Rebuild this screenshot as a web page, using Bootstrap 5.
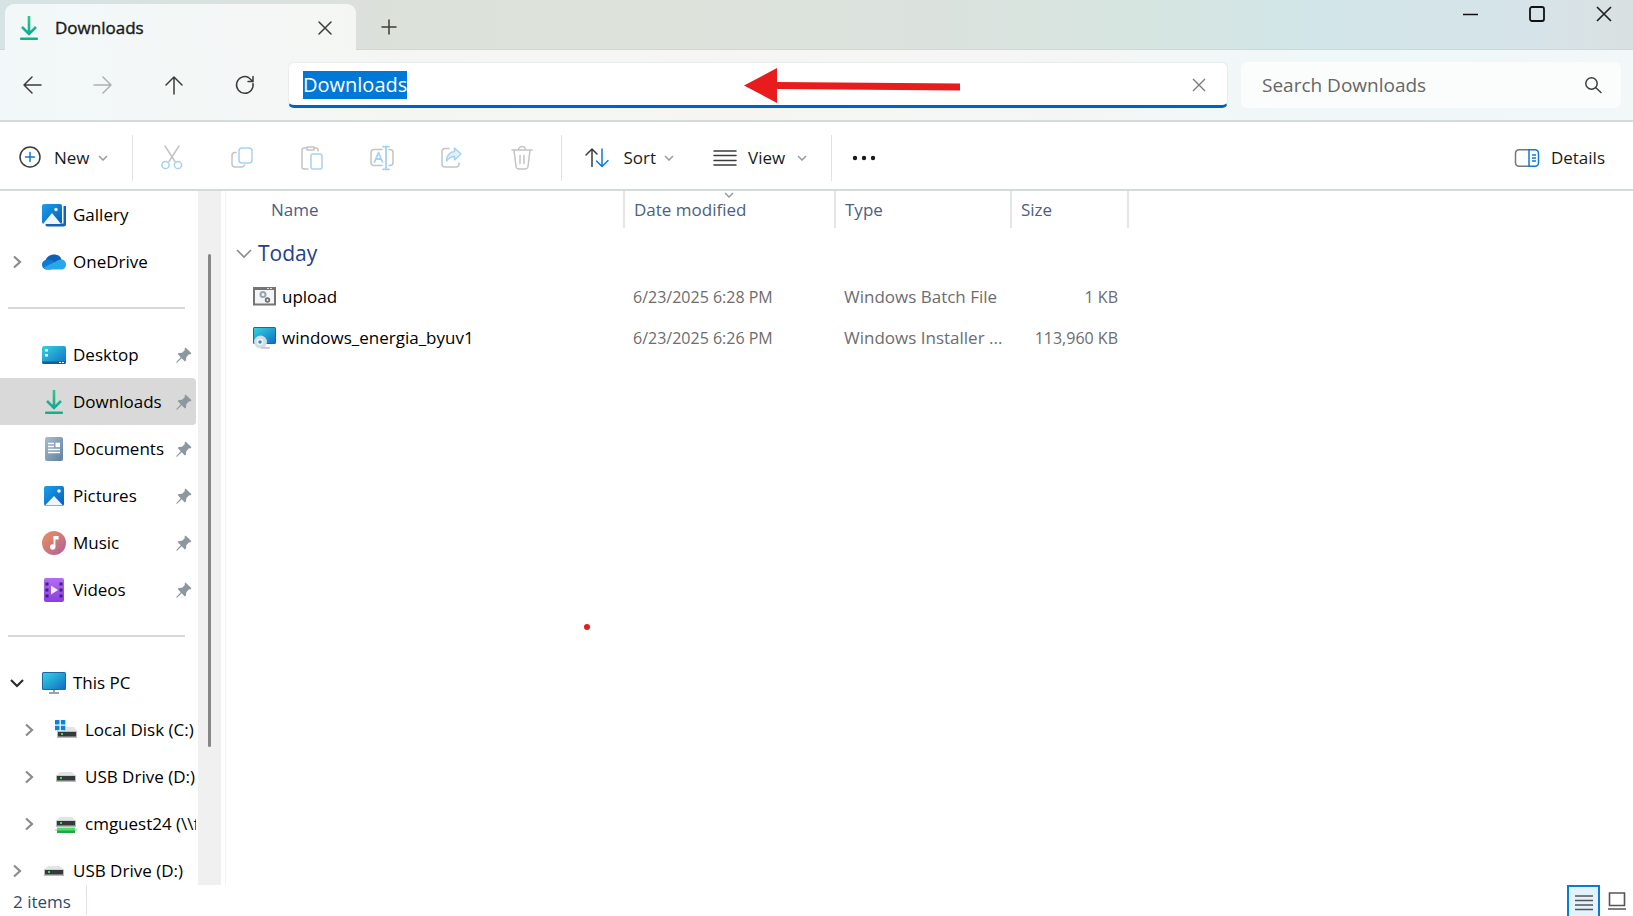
<!DOCTYPE html>
<html lang="en">
<head>
<meta charset="utf-8">
<meta name="viewport" content="width=device-width, initial-scale=1">
<title>Downloads</title>
<link href="https://cdn.jsdelivr.net/npm/bootstrap@5.3.0/dist/css/bootstrap.min.css" rel="stylesheet">
<style>
  body { font-family: "Open Sans", "Noto Sans", sans-serif; font-size: 17px; line-height: 24px; color: #1a1a1a; background: #fff; }
  svg { display: block; flex: none; fill: none; overflow: visible; }
  button { border: 0; background: transparent; padding: 0; color: inherit; display: flex; align-items: center; justify-content: center; }
  .line-icon { stroke: #3c3c3c; stroke-width: 1.5; stroke-linecap: round; stroke-linejoin: round; }
  .faded { stroke: #adb0b0; }
  .grey { stroke: #c4c4c4; } .pale { stroke: #a5d2f3; } .blue { stroke: #0a7bd8; }

  .titlebar { height: 50px; padding-left: 5px; background: linear-gradient(90deg, #d5e3e4 0, #dce1d9 25%, #dde2db 42%, #dbe2de 58%, #d6e5e0 70%, #d2e5e8 80%, #d6e4ea 93%, #dae0e1 100%); box-shadow: inset 0 -1px #cfd8d6; }
  .tab { width: 351px; height: 46px; padding: 2px 24px 0 15px; border-radius: 9px 9px 0 0; background: linear-gradient(90deg, #f2f8f9, #f5f6f4); }
  .tab-title { margin-left: 17px; -webkit-text-stroke: 0.4px; }
  .new-tab { width: 66px; height: 46px; }
  .window-controls { gap: 9px; }
  .window-controls button { width: 58px; height: 28px; }

  .navrow { height: 72px; padding: 0 12px 0 0; border-bottom: 2px solid #d3dad9; background: linear-gradient(90deg, #f2f8f9 0, #f5f6f4 24%, #f6f5f4 45%, #f4f6f5 65%, #f0f7f8 80%, #f2f7f8 100%); }
  .nav-buttons { gap: 7px; margin-right: 11px; }
  .nav-buttons button { width: 64px; height: 46px; }
  .address { height: 46px; border-radius: 6px; background: #fff; border: 1px solid #e8ecec; border-bottom: 3px solid #0063c4; padding: 2px 21px 0 14px; margin-right: 13px; }
  .search { width: 380px; height: 46px; border-radius: 6px; background: #fbfdfd; padding: 0 20px 0 21px; }
  .address input, .search input { border: 0; outline: 0; background: transparent; padding: 0; min-width: 0; font-size: 20px; line-height: 28px; height: 28px; color: #1a1a1a; }
  .search input { font-size: 19px; }
  .address input::selection { background: #0078d7; color: #fff; }
  .search input::placeholder { color: #666; opacity: 1; }
  .callout { left: 455px; top: 5px; }

  .toolbar-row { height: 69px; padding-top: 4px; border-bottom: 2px solid #d5dada; }
  .toolbar-row > button { height: 46px; }
  .rule { width: 1px; height: 46px; background: #e2e2e2; }
  .tool { width: 70px; }

  .sidebar { width: 198px; }
  .side-item { height: 47px; padding: 0 6px 0 8px; color: #000; text-decoration: none; white-space: nowrap; }
  .side-item .twisty { flex: none; width: 18px; margin-right: 15px; }
  .side-item .glyph { flex: none; width: 26px; margin-right: 6px; }
  .side-item .glyph svg { margin: auto; }
  .side-item.nested { padding: 0 2px 0 20px; }
  .side-item.selected { background: #d9d9d9; border-radius: 0 4px 4px 0; margin-right: 2px; padding-right: 4px; }
  .label-clip { min-width: 0; overflow: hidden; }
  .side-rule { height: 46px; padding: 0 13px 0 8px; }
  .side-rule hr { width: 100%; margin: 0; border-top: 2px solid #d8d8d8; opacity: 1; }
  .scroll-track { width: 23px; background: #f0f0f0; }
  .scroll-thumb { width: 3px; height: 71%; margin-top: 63px; background: #868686; border-radius: 2px; }
  .files { border-left: 1px solid #f3f3f3; margin-left: 4px; }
  .file-table { table-layout: fixed; width: 902px; color: #6d6d6d; font-size: 16px; }
  .file-table th, .file-table td { padding: 0 10px 0 9px; white-space: nowrap; overflow: hidden; text-overflow: ellipsis; }
  .file-table thead th { height: 37px; font-size: 17px; font-weight: 400; color: #4c607f; border-right: 2px solid #e5e5e5; position: relative; }
  .file-table thead th:first-child { padding-left: 45px; }
  .file-table .sort-mark { position: absolute; top: 1px; left: 50%; margin-left: -6px; }
  .file-table .icon-gap { gap: 6px; }
  .group-row th { height: 48px; padding: 11px 0 0 10px !important; font-size: 21px; line-height: 28px; font-weight: 400; color: #24408e; }
  .file-table tbody td { height: 41px; }
  .file-table tbody td:first-child { padding-left: 27px; color: #000; font-size: 17px; }
  .file-table tbody td:nth-child(3) { font-size: 17px; padding-right: 0; }
  .red-dot { width: 6px; height: 6px; border-radius: 50%; background: #e81c1c; left: 358px; top: 433px; }

  .statusbar { height: 31px; color: #2d4a73; }
  .statusbar .count { margin-left: 13px; padding: 3px 15px 0 0; height: 30px; line-height: 27px; }
  .view-button { width: 33px; height: 31px; }
  .view-button.active { border: 2px solid #0a7bd8; border-bottom: 0; background: #e3f3fb; }
</style>
</head>
<body class="d-flex flex-column vh-100 overflow-hidden">

<svg width="0" height="0" class="position-absolute" aria-hidden="true">
  <defs>
    <linearGradient id="g-green" gradientUnits="userSpaceOnUse" x1="0" y1="0" x2="0" y2="20"><stop offset="0" stop-color="#2cc98b"/><stop offset="1" stop-color="#12a594"/></linearGradient>
    <linearGradient id="g-screen" x1="0" y1="0" x2="1" y2="1"><stop offset="0" stop-color="#34d3e0"/><stop offset="1" stop-color="#0f6fc5"/></linearGradient>
    <linearGradient id="g-picture" x1="0" y1="0" x2="1" y2="1"><stop offset="0" stop-color="#1aa0ea"/><stop offset="1" stop-color="#0a5cb8"/></linearGradient>
    <linearGradient id="g-doc" x1="0" y1="0" x2="1" y2="1"><stop offset="0" stop-color="#a9bdd0"/><stop offset="1" stop-color="#5f7f9f"/></linearGradient>
    <linearGradient id="g-music" x1="0" y1="0" x2="1" y2="1"><stop offset="0" stop-color="#f0915a"/><stop offset="1" stop-color="#ae5f9c"/></linearGradient>
    <linearGradient id="g-video" x1="0" y1="0" x2="0" y2="1"><stop offset="0" stop-color="#b36cf2"/><stop offset="1" stop-color="#8a3ee0"/></linearGradient>
    <symbol id="i-download" viewBox="0 0 18 24"><g stroke="url(#g-green)" stroke-width="2.6" fill="none"><path d="M9 0v17.500M2 11l7 7 7-7"/></g><path d="M1 21.500h16a1.200 1.200 0 0 1 0 2.500H1a1.200 1.200 0 0 1 0-2.500z" fill="#14b08a"/></symbol>
    <symbol id="i-pin" viewBox="0 0 16 16"><path d="M9.500.5 15.500 6.200 14.200 7.500 13 7.300 10.300 10.200 10 13.600 8.800 14.600 5.700 11.300 1 15.700.3 15.700.4 15 4.700 10.300 1.700 7 2.700 6 6.100 5.800 8.900 3 8.500 1.700z" fill="#8d979e"/></symbol>
    <symbol id="i-right" viewBox="0 0 18 18"><path d="M6 3.500 12 9l-6 5.500" stroke="#8b8b8b" stroke-width="2.200" fill="none"/></symbol>
    <symbol id="i-chev" viewBox="0 0 10 6"><path d="M1 1l4 4 4-4" stroke="#9a9a9a" stroke-width="1.500" fill="none"/></symbol>
    <symbol id="i-drive" viewBox="0 0 20 12"><path d="M4 1h12l4 4H0z" fill="#e2e4e6"/><path d="M0 4.500h20V11H0z" fill="#b9bcbe"/><path d="M1 5h18v4.500H1z" fill="#343a3a"/><path d="M4 6h2v2H4z" fill="#3be04c"/></symbol>
  </defs>
</svg>

<header>
  <div class="titlebar d-flex">
    <div class="tab d-flex align-items-center align-self-end">
      <svg width="18" height="24"><use href="#i-download"/></svg>
      <span class="tab-title flex-grow-1">Downloads</span>
      <button type="button" aria-label="Close tab"><svg class="line-icon" width="14" height="14"><path d="M1 1l12 12M13 1 1 13"/></svg></button>
    </div>
    <button type="button" class="new-tab align-self-end" aria-label="New tab"><svg class="line-icon" width="14" height="14"><path d="M7 0v14M0 7h14"/></svg></button>
    <div class="window-controls d-flex ms-auto">
      <button type="button" aria-label="Minimize"><svg width="16" height="16" stroke="#111" stroke-width="1.500"><path d="M1 8.500h15"/></svg></button>
      <button type="button" aria-label="Maximize"><svg width="16" height="16" stroke="#111" stroke-width="1.800"><rect x="1" y="1" width="14" height="14" rx="2"/></svg></button>
      <button type="button" aria-label="Close"><svg width="16" height="16" stroke="#222" stroke-width="1.700"><path d="M1 1l14 14M15 1 1 15"/></svg></button>
    </div>
  </div>

  <div class="navrow d-flex align-items-center">
    <div class="nav-buttons d-flex">
      <button type="button" aria-label="Back"><svg class="line-icon" width="18" height="18"><path d="M18 9H1M9 1 1 9l8 8"/></svg></button>
      <button type="button" aria-label="Forward"><svg class="line-icon faded" width="18" height="18"><path d="M0 9h17M9 1l8 8-8 8"/></svg></button>
      <button type="button" aria-label="Up"><svg class="line-icon" width="18" height="18"><path d="M9 18V1M1 9l8-8 8 8"/></svg></button>
      <button type="button" aria-label="Refresh"><svg class="line-icon" width="18" height="18"><path d="M17 7.500A8.300 8.300 0 1 1 12.500 1.500L17 5.500M17 .5v5h-5"/></svg></button>
    </div>
    <div class="address position-relative d-flex align-items-center flex-grow-1">
      <input id="address" class="flex-grow-1" type="text" value="Downloads" aria-label="Address">
      <button type="button" aria-label="Stop editing"><svg width="14" height="14" stroke="#7b7b7b" stroke-width="1.400"><path d="M1 1l12 12M13 1 1 13"/></svg></button>
      <svg class="callout position-absolute" width="217" height="36" aria-hidden="true"><path fill="#e81c1c" d="M0 17.500 33 0v14l183 1.500v7L33 21v14z"/></svg>
    </div>
    <div class="search d-flex align-items-center">
      <input class="flex-grow-1" type="text" placeholder="Search Downloads" aria-label="Search Downloads">
      <button type="button" aria-label="Search"><svg class="line-icon" width="16" height="16"><circle cx="6.500" cy="6.500" r="5.700"/><path d="M10.800 10.800 16 15.500"/></svg></button>
    </div>
  </div>

  <div class="toolbar-row d-flex align-items-center" role="toolbar" aria-label="Commands">
    <button type="button" class="ps-3 pe-4"><svg class="line-icon ms-1" width="22" height="22"><circle cx="10" cy="10" r="10"/><path class="blue" d="M10 5.500v9M5.500 10h9"/></svg><span class="ms-2 ps-1 me-2">New</span><svg width="10" height="6"><use href="#i-chev"/></svg></button>
    <div class="rule me-1"></div>
    <button type="button" class="tool" aria-label="Cut"><svg class="line-icon grey" width="22" height="24"><path d="M4 0l10 15.500M18 0 8 15.500"/><g class="pale"><circle cx="4.500" cy="19" r="3.600"/><circle cx="17" cy="19" r="3.600"/></g></svg></button>
    <button type="button" class="tool" aria-label="Copy"><svg class="line-icon grey" width="22" height="22"><path d="M5 5.500H4a3 3 0 0 0-3 3V17a3 3 0 0 0 3 3h7a3 3 0 0 0 2.500-2"/><rect class="pale" x="8" y="1" width="13" height="15" rx="3"/></svg></button>
    <button type="button" class="tool" aria-label="Paste"><svg class="line-icon grey" width="22" height="24"><path d="M6 2H3a2 2 0 0 0-2 2v17a2 2 0 0 0 2 2h4M13 2h2a2 2 0 0 1 2 2v1M6 1h7v3H6z"/><rect class="pale" x="10" y="8" width="11" height="15" rx="2"/></svg></button>
    <button type="button" class="tool" aria-label="Rename"><svg class="line-icon grey" width="24" height="24"><path d="M12 3.500H4a3 3 0 0 0-3 3v10a3 3 0 0 0 3 3h8M19 3.500h1a3 3 0 0 1 3 3v10a3 3 0 0 1-3 3h-1"/><path class="pale" stroke-width="1.800" d="M13 .7h6M13 23.300h6M16 1v22M4.500 16 8.500 6.500l4 9.500M6 13h5"/></svg></button>
    <button type="button" class="tool" aria-label="Share"><svg class="line-icon grey" width="22" height="22"><path d="M8 1.500H4a3 3 0 0 0-3 3V17a3 3 0 0 0 3 3h11a3 3 0 0 0 3-3v-1"/><path class="pale" fill="#e3f1fb" d="M13.500 1 20 7l-6.500 6V9.500C9.500 9.500 7.500 11 5.500 14c0-5 3-9 8-9.500z"/></svg></button>
    <button type="button" class="tool" aria-label="Delete"><svg class="line-icon grey" width="20" height="24"><path d="M0 4h20M6.500 4a3.500 3.500 0 0 1 7 0M2 4l2 16.500a3 3 0 0 0 3 2.500h6a3 3 0 0 0 3-2.500L18 4M8 9.500v8M12 9.500v8"/></svg></button>
    <div class="rule ms-1"></div>
    <button type="button" class="ms-4"><svg class="line-icon" width="22" height="20"><path d="M6 18.500V1M0 7l6-6 5 5"/><path class="blue" d="M16 1v17.500M10.500 13l5.500 5.500 6-6"/></svg><span class="ms-3 me-2">Sort</span><svg width="10" height="6"><use href="#i-chev"/></svg></button>
    <button type="button" class="ms-3 ps-4"><svg class="line-icon" width="22" height="16"><path d="M0 1h22M0 5.500h22M0 10.500h22M0 15h22"/></svg><span class="ms-2 ps-1 me-2 pe-1">View</span><svg width="10" height="6"><use href="#i-chev"/></svg></button>
    <div class="rule ms-4"></div>
    <button type="button" class="ms-3 px-1" aria-label="See more"><svg width="24" height="6"><g fill="#1a1a1a"><circle cx="3" cy="3" r="2.200"/><circle cx="12" cy="3" r="2.200"/><circle cx="21" cy="3" r="2.200"/></g></svg></button>
    <button type="button" class="ms-auto me-4 pe-1"><svg width="24" height="18" stroke-width="1.500"><path stroke="#777" d="M14 .8H4a3.500 3.500 0 0 0-3.500 3.500v9.400A3.500 3.500 0 0 0 4 17.200h10"/><path stroke="#0a7bd8" d="M14 .8h6a3.500 3.500 0 0 1 3.500 3.500v9.400a3.500 3.500 0 0 1-3.500 3.500h-6zM17 6h4M17 9h4M17 12h4"/></svg><span class="ms-2 ps-1">Details</span></button>
  </div>
</header>

<main class="d-flex flex-grow-1 overflow-hidden">
  <nav class="sidebar flex-shrink-0 overflow-hidden" aria-label="Folders">
    <a href="#" class="side-item d-flex align-items-center"><span class="twisty"></span><span class="glyph"><svg width="24" height="24"><path d="M4 20.500h17.500V3H24v18a2.500 2.500 0 0 1-2.500 2.500H5a2 2 0 0 1-1-3z" fill="#1462b5"/><rect width="20" height="20" rx="2" y="1" fill="url(#g-picture)"/><path d="M1 21 10 10l9 11z" fill="#eef6fd"/><circle cx="14" cy="6.500" r="1.700" fill="#eef6fd"/></svg></span>Gallery</a>
    <a href="#" class="side-item d-flex align-items-center"><span class="twisty"><svg width="18" height="18"><use href="#i-right"/></svg></span><span class="glyph"><svg width="24" height="16"><path d="M3.500 7C4 3 8 .5 12 .5c4 0 7 2 7.500 5.500L16 10H6z" fill="#0b62b8"/><path d="M6 5.500c3 0 5 1.500 8 3.500l-5 6.500H5C2 15.500 0 13.500 0 10.500s3-5 6-5z" fill="#1079d4"/><path d="M19 5.500c3 0 5 2 5 5s-2 5-5 5H6c-2 0-3.500-.5-4.500-2L13 8c2-1.500 4-2.500 6-2.500z" fill="#28a8ea"/></svg></span>OneDrive</a>
    <div class="side-rule d-flex align-items-center"><hr></div>
    <a href="#" class="side-item d-flex align-items-center"><span class="twisty"></span><span class="glyph"><svg width="24" height="18"><rect width="24" height="18" rx="2" fill="url(#g-screen)"/><path d="M0 15.500h24v.5a2 2 0 0 1-2 2H2a2 2 0 0 1-2-2z" fill="#0f5c9e"/><path d="M3 3h3v2.500H3zM3 8h3v2.500H3z" fill="#e8fbff"/><path d="M17 16h2v1h-2zM20 16h2v1h-2z" fill="#fff"/></svg></span><span class="flex-grow-1">Desktop</span><svg width="16" height="16"><use href="#i-pin"/></svg></a>
    <a href="#" class="side-item selected d-flex align-items-center" aria-current="page"><span class="twisty"></span><span class="glyph"><svg width="18" height="24"><use href="#i-download"/></svg></span><span class="flex-grow-1">Downloads</span><svg width="16" height="16"><use href="#i-pin"/></svg></a>
    <a href="#" class="side-item d-flex align-items-center"><span class="twisty"></span><span class="glyph"><svg width="18" height="24"><rect width="18" height="24" rx="2" fill="url(#g-doc)"/><path d="M3 6.500h6M3 9.500h6M3 12.500h12M3 15.500h12" stroke="#fff" stroke-width="1.600"/><path d="M10.500 5.700h4.500v4.500h-4.500z" fill="#fff"/></svg></span><span class="flex-grow-1">Documents</span><svg width="16" height="16"><use href="#i-pin"/></svg></a>
    <a href="#" class="side-item d-flex align-items-center"><span class="twisty"></span><span class="glyph"><svg width="20" height="20"><rect width="20" height="20" rx="2" fill="url(#g-picture)"/><path d="M1 19.500 10 10l9 9.500z" fill="#eef6fd"/><circle cx="15" cy="5" r="1.800" fill="#eef6fd"/></svg></span><span class="flex-grow-1">Pictures</span><svg width="16" height="16"><use href="#i-pin"/></svg></a>
    <a href="#" class="side-item d-flex align-items-center"><span class="twisty"></span><span class="glyph"><svg width="24" height="24"><circle cx="12" cy="12" r="12" fill="url(#g-music)"/><path d="M12.500 5v11" stroke="#fff" stroke-width="1.800"/><path d="M11.600 5h5v3.500h-5z" fill="#fff"/><circle cx="10.700" cy="16" r="2.700" fill="#fff"/></svg></span><span class="flex-grow-1">Music</span><svg width="16" height="16"><use href="#i-pin"/></svg></a>
    <a href="#" class="side-item d-flex align-items-center"><span class="twisty"></span><span class="glyph"><svg width="20" height="24"><rect width="20" height="24" rx="2" fill="url(#g-video)"/><path d="M1.500 4.500h3v3h-3zM1.500 10.500h3v3h-3zM1.500 16.500h3v3h-3zM15.500 4.500h3v3h-3zM15.500 10.500h3v3h-3zM15.500 16.500h3v3h-3z" fill="#44207c"/><path d="M7 7.500 14 12l-7 4.500z" fill="#f4ecfc"/></svg></span><span class="flex-grow-1">Videos</span><svg width="16" height="16"><use href="#i-pin"/></svg></a>
    <div class="side-rule d-flex align-items-center"><hr></div>
    <a href="#" class="side-item d-flex align-items-center"><span class="twisty"><svg width="18" height="18"><path d="M3 6l6 6 6-6" stroke="#2b2b2b" stroke-width="2.200"/></svg></span><span class="glyph"><svg width="24" height="22"><path d="M7 21h10M12 18v3" stroke="#9aa3ab" stroke-width="2"/><rect width="24" height="18" rx="1.500" fill="#1768ab"/><rect x="1" y="1" width="22" height="16" rx="1" fill="url(#g-screen)"/></svg></span>This PC</a>
    <a href="#" class="side-item nested d-flex align-items-center"><span class="twisty"><svg width="18" height="18"><use href="#i-right"/></svg></span><span class="glyph"><svg width="24" height="20"><path d="M10 7h10l3 4H10z" fill="#e2e4e6"/><path d="M3 11h20v7H3z" fill="#b9bcbe"/><path d="M4 12h18v4.500H4z" fill="#343a3a"/><path d="M7 13h2v2H7z" fill="#3be04c"/><path d="M1 0h4.500v4.500H1zM6.800 0h4.500v4.500H6.800zM1 5.800h4.500v4.500H1zM6.800 5.800h4.500v4.500H6.800z" fill="#0a84dc"/></svg></span>Local Disk (C:)</a>
    <a href="#" class="side-item nested d-flex align-items-center"><span class="twisty"><svg width="18" height="18"><use href="#i-right"/></svg></span><span class="glyph"><svg width="20" height="12"><use href="#i-drive"/></svg></span>USB Drive (D:)</a>
    <a href="#" class="side-item nested d-flex align-items-center"><span class="twisty"><svg width="18" height="18"><use href="#i-right"/></svg></span><span class="glyph"><svg width="22" height="18"><use href="#i-drive" x="1" y="1" width="20" height="12"/><path d="M2 12.500h18v5H2z" fill="#4fe06a"/><path d="M2 15.500h18v2.500H2z" fill="#1fa548"/><path d="M0 15h2M20 15h2" stroke="#a9b3ab"/></svg></span><span class="label-clip">cmguest24 (\\f</span></a>
    <a href="#" class="side-item d-flex align-items-center"><span class="twisty"><svg width="18" height="18"><use href="#i-right"/></svg></span><span class="glyph"><svg width="20" height="12"><use href="#i-drive"/></svg></span>USB Drive (D:)</a>
  </nav>
  <div class="scroll-track d-flex justify-content-center flex-shrink-0"><div class="scroll-thumb"></div></div>

  <section class="files position-relative flex-grow-1">
    <table class="file-table">
      <colgroup><col style="width:398px"><col style="width:211px"><col style="width:176px"><col style="width:117px"></colgroup>
      <thead><tr>
        <th scope="col">Name</th>
        <th scope="col">Date modified<svg class="sort-mark" width="10" height="6"><use href="#i-chev"/></svg></th>
        <th scope="col">Type</th>
        <th scope="col">Size</th>
      </tr></thead>
      <tbody>
        <tr class="group-row"><th colspan="4" class="align-top"><div class="icon-gap d-flex align-items-center"><svg width="16" height="9"><path d="M1 1l7 7 7-7" stroke="#8a8a8a" stroke-width="1.600"/></svg>Today</div></th></tr>
        <tr>
          <td><div class="icon-gap d-flex align-items-center"><svg width="23" height="19"><rect x="1" y="1" width="21" height="16.500" fill="#f4f5f6" stroke="#757575" stroke-width="2"/><path d="M1 1.500h21" stroke="#757575" stroke-width="3"/><path d="M14 1.500h2M17 1.500h2" stroke="#ddd"/><circle cx="10" cy="7.500" r="2.500" stroke="#9aa4ac" stroke-width="2"/><circle cx="14.500" cy="13" r="1.800" stroke="#69727a" stroke-width="1.800"/></svg>upload</div></td>
          <td>6/23/2025 6:28 PM</td><td>Windows Batch File</td><td class="text-end">1 KB</td>
        </tr>
        <tr>
          <td><div class="icon-gap d-flex align-items-center"><svg width="23" height="22"><rect width="23" height="17" rx="1.500" fill="#1768ab"/><rect x="1" y="1" width="21" height="15" fill="url(#g-screen)"/><circle cx="7.500" cy="15" r="6.500" fill="#d4dbe1"/><path d="M8 20h9v1.800H8z" fill="#c3cad0"/><circle cx="7" cy="15" r="2.500" fill="#2a8ecd" stroke="#f2f6f8" stroke-width="1.500"/></svg>windows_energia_byuv1</div></td>
          <td>6/23/2025 6:26 PM</td><td>Windows Installer ...</td><td class="text-end">113,960 KB</td>
        </tr>
      </tbody>
    </table>
    <span class="red-dot position-absolute" aria-hidden="true"></span>
  </section>
</main>

<footer class="statusbar d-flex align-items-start">
  <span class="count border-end">2 items</span>
  <button type="button" class="view-button active ms-auto" aria-label="Details view"><svg width="18" height="16" stroke="#555" stroke-width="1.600"><path d="M0 2h18M0 6.500h18M0 11h18M0 15.500h18"/></svg></button>
  <button type="button" class="view-button" aria-label="Large icons view"><svg width="18" height="18" stroke="#555" stroke-width="1.600"><path d="M1.500 1h15v12.500h-15zM0 17h18"/></svg></button>
</footer>

<script src="https://cdn.jsdelivr.net/npm/bootstrap@5.3.0/dist/js/bootstrap.bundle.min.js"></script>
<script>
  const address = document.getElementById('address');
  address.focus();
  address.select();
</script>
</body>
</html>
